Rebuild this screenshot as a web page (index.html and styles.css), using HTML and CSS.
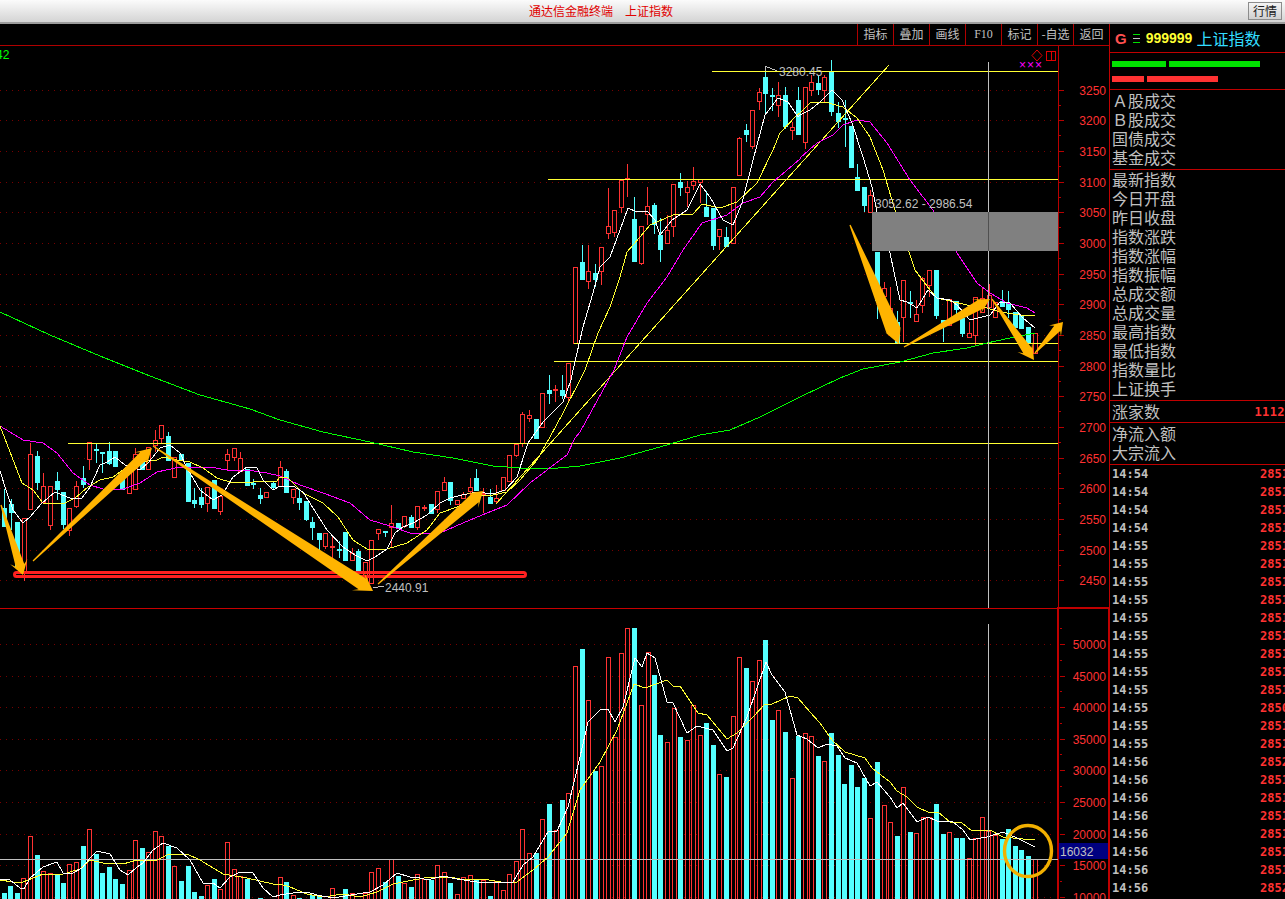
FILE: index.html
```html
<!doctype html>
<html>
<head>
<meta charset="utf-8">
<title>通达信金融终端</title>
<link rel="stylesheet" href="styles.css">
</head>
<body>
<div class="titleBar">
	<span class="titleText">通达信金融终端<span class="titleName">上证指数</span></span>
	<span class="titleBtn">行情</span>
</div>
<div class="mainRow">
	<div class="chartCol">
		<div class="toolBar">
			<span class="tool">指标</span>
			<span class="tool">叠加</span>
			<span class="tool">画线</span>
			<span class="tool toolLatin">F10</span>
			<span class="tool">标记</span>
			<span class="tool">-自选</span>
			<span class="tool">返回</span>
		</div>
		<svg id="Chart" class="chart" viewBox="0 46 1110 853" width="1110" height="853"></svg>
	</div>
	<div class="sidePanel">
		<div class="quoteHead">
			<span class="quoteG">G</span>
			<svg class="quoteIcon" width="7" height="11" viewBox="0 0 7 11">
				<path d="M0 0.5h7" stroke="#00e000"/>
				<path d="M0 4.5h7" stroke="#c0c0c0"/>
				<path d="M0 8.5h7" stroke="#00e000"/>
			</svg>
			<span class="quoteCode">999999</span>
			<span class="quoteName">上证指数</span>
		</div>
		<div class="bars">
			<div class="barRow"><i class="bar barGreen barG1"></i><i class="bar barGreen barG2"></i></div>
			<div class="barRow"><i class="bar barRed barR1"></i><i class="bar barRed barR2"></i></div>
		</div>
		<div class="group groupFirst">
			<div class="label">Ａ股成交</div>
			<div class="label">Ｂ股成交</div>
			<div class="label">国债成交</div>
			<div class="label">基金成交</div>
		</div>
		<div class="group groupIndex">
			<div class="label">最新指数</div>
			<div class="label">今日开盘</div>
			<div class="label">昨日收盘</div>
			<div class="label">指数涨跌</div>
			<div class="label">指数涨幅</div>
			<div class="label">指数振幅</div>
			<div class="label">总成交额</div>
			<div class="label">总成交量</div>
			<div class="label">最高指数</div>
			<div class="label">最低指数</div>
			<div class="label">指数量比</div>
			<div class="label">上证换手</div>
		</div>
		<div class="riseRow">
			<span class="label">涨家数</span>
			<span class="riseNum">1112</span>
		</div>
		<div class="group groupFirst">
			<div class="label">净流入额</div>
			<div class="label">大宗流入</div>
		</div>
		<div class="ticks">
			<div class="tick"><span>14:54</span><b>2851</b></div>
			<div class="tick"><span>14:54</span><b>2851</b></div>
			<div class="tick"><span>14:54</span><b>2851</b></div>
			<div class="tick"><span>14:54</span><b>2851</b></div>
			<div class="tick"><span>14:55</span><b>2851</b></div>
			<div class="tick"><span>14:55</span><b>2851</b></div>
			<div class="tick"><span>14:55</span><b>2851</b></div>
			<div class="tick"><span>14:55</span><b>2851</b></div>
			<div class="tick"><span>14:55</span><b>2851</b></div>
			<div class="tick"><span>14:55</span><b>2851</b></div>
			<div class="tick"><span>14:55</span><b>2851</b></div>
			<div class="tick"><span>14:55</span><b>2851</b></div>
			<div class="tick"><span>14:55</span><b>2851</b></div>
			<div class="tick"><span>14:55</span><b>2850</b></div>
			<div class="tick"><span>14:55</span><b>2851</b></div>
			<div class="tick"><span>14:55</span><b>2851</b></div>
			<div class="tick"><span>14:56</span><b>2852</b></div>
			<div class="tick"><span>14:56</span><b>2851</b></div>
			<div class="tick"><span>14:56</span><b>2851</b></div>
			<div class="tick"><span>14:56</span><b>2851</b></div>
			<div class="tick"><span>14:56</span><b>2851</b></div>
			<div class="tick"><span>14:56</span><b>2851</b></div>
			<div class="tick"><span>14:56</span><b>2851</b></div>
			<div class="tick"><span>14:56</span><b>2852</b></div>
		</div>
	</div>
</div>
<script src="chart.js"></script>
</body>
</html>
```

FILE: styles.css
```css
html, body {
	margin: 0;
	height: 899px;
	overflow: hidden;
	background-color: black;
}
body {
	font-family: "Noto Sans CJK SC", "Liberation Sans", sans-serif;
	color: #c0c0c0;
}
.titleBar {
	display: flex;
	align-items: center;
	height: 24px;
	box-sizing: border-box;
	border-bottom: 2px solid #9c9c9c;
	background: linear-gradient(#fbfbfb, #d4d4d4);
}
.titleText {
	margin-left: 529px;
	font-size: 12px;
	line-height: 22px;
	color: #e00000;
}
.titleName {
	margin-left: 12px;
}
.titleBtn {
	margin-left: auto;
	margin-right: 3px;
	width: 32px;
	height: 16px;
	border: 1px solid #8c8c8c;
	background: linear-gradient(#f4f4f4, #cfcfcf);
	color: #202020;
	font-size: 12px;
	line-height: 16px;
	text-align: center;
}
.mainRow {
	display: flex;
}
.chartCol {
	width: 1109px;
	flex: none;
	overflow: hidden;
}
.toolBar {
	display: flex;
	justify-content: flex-end;
	height: 22px;
	box-sizing: border-box;
	border-bottom: 1px solid #b00000;
}
.tool {
	width: 36px;
	box-sizing: border-box;
	border-left: 1px solid #b00000;
	font-size: 12px;
	line-height: 20px;
	text-align: center;
	white-space: nowrap;
}
.toolLatin {
	font-family: "Liberation Serif", serif;
	font-size: 12px;
}
.chart {
	display: block;
	font-family: "Liberation Sans", sans-serif;
	font-size: 12px;
}
.sidePanel {
	flex: 1;
	border-left: 1px solid #c00000;
	height: 875px;
	overflow: hidden;
	font-size: 16px;
}
.quoteHead {
	display: flex;
	align-items: center;
	height: 28px;
	padding-left: 5px;
	border-bottom: 1px solid #c00000;
}
.quoteG {
	font-family: "Liberation Sans", sans-serif;
	font-weight: bold;
	font-size: 15px;
	color: #ff5050;
}
.quoteIcon {
	margin: 2px 0 0 6px;
}
.quoteCode {
	margin-left: 6px;
	font-family: "Liberation Sans", sans-serif;
	font-weight: bold;
	font-size: 14px;
	color: #ffff33;
}
.quoteName {
	margin-left: 4px;
	color: #33ddff;
}
.bars {
	height: 37px;
	box-sizing: border-box;
	padding: 8px 0 0 2px;
	border-bottom: 1px solid #c00000;
}
.barRow {
	display: flex;
	gap: 3px;
	margin-bottom: 9px;
}
.bar {
	height: 6px;
}
.barGreen {
	background: #00e400;
}
.barRed {
	background: #ff3232;
}
.barG1 {
	width: 54px;
}
.barG2 {
	width: 91px;
}
.barR1 {
	width: 32px;
}
.barR2 {
	width: 71px;
}
.group {
	padding-left: 2px;
	border-bottom: 1px solid #c00000;
}
.groupFirst {
	padding-top: 1px;
	padding-bottom: 2px;
}
.groupIndex {
	padding-bottom: 2px;
}
.label {
	height: 19px;
	line-height: 19px;
	white-space: nowrap;
}
.riseRow {
	display: flex;
	justify-content: space-between;
	align-items: center;
	height: 21px;
	padding-left: 2px;
	border-bottom: 1px solid #c00000;
}
.riseNum {
	font-family: "DejaVu Sans Mono", monospace;
	font-weight: bold;
	font-size: 12px;
	letter-spacing: 0.4px;
	color: #ff3232;
}
.ticks {
	font-family: "DejaVu Sans Mono", monospace;
	font-size: 12px;
	font-weight: bold;
}
.tick {
	display: grid;
	grid-template-columns: 148px auto;
	height: 18px;
	line-height: 18px;
	padding-left: 2px;
	white-space: nowrap;
}
.tick b {
	color: #ff3232;
}
```

FILE: chart.js
```js
var NS = 'http://www.w3.org/2000/svg';
var Chart = document.getElementById('Chart');

var RED = '#ff3232';
var CYAN = '#54ffff';
var YELLOW = '#ffff33';
var AXIS = '#b80000';
var GRID = '#780000';
var AMBER = '#ffb400';

function el(name, attrs, text) {
	var node = document.createElementNS(NS, name);
	for (var k in attrs) {
		node.setAttribute(k, attrs[k]);
	}
	if (text !== undefined) {
		node.textContent = text;
	}
	Chart.appendChild(node);
	return node;
}

function hline(y, x1, x2, color, dash) {
	var attrs = {x1: x1, x2: x2, y1: y + 0.5, y2: y + 0.5, stroke: color, 'shape-rendering': 'crispEdges'};
	if (dash) {
		attrs['stroke-dasharray'] = dash;
	}
	el('line', attrs);
}

function vline(x, y1, y2, color, width) {
	el('line', {x1: x + 0.5, x2: x + 0.5, y1: y1, y2: y2, stroke: color, 'stroke-width': width || 1, 'shape-rendering': 'crispEdges'});
}

// data below was traced off crops at 3x, so every group carries the crop origin
function trace(x0, y0, pts) {
	var out = [];
	for (var i = 0; i < pts.length; i += 2) {
		out.push(Math.round(x0 + pts[i] / 3) + ',' + Math.round(y0 + pts[i + 1] / 3));
	}
	return out;
}

function curve(color, groups) {
	var pts = [];
	for (var i = 0; i < groups.length; i++) {
		pts = pts.concat(trace(groups[i][0], groups[i][1], groups[i][2]));
	}
	el('polyline', {points: pts.join(' '), fill: 'none', stroke: color, 'shape-rendering': 'crispEdges'});
}

function candle(x0, y0, row) {
	var x = Math.round(x0 + row[0] / 3);
	var color = row[1] ? RED : CYAN;
	var top = Math.round(y0 + row[2] / 3);
	var bot = Math.round(y0 + row[3] / 3);
	if (bot <= top) {
		bot = top + 1;
	}
	var hi = row[4] === undefined ? top : Math.round(y0 + row[4] / 3);
	var lo = row[5] === undefined ? bot : Math.round(y0 + row[5] / 3);
	vline(x, hi, top, color);
	vline(x, bot, lo, color);
	if (row[1]) {
		el('rect', {x: x - 1.5, y: top + 0.5, width: 4, height: bot - top, fill: 'black', stroke: color, 'shape-rendering': 'crispEdges'});
	}
	else {
		el('rect', {x: x - 2, y: top, width: 5, height: bot - top + 1, fill: color, 'shape-rendering': 'crispEdges'});
	}
}

function volBar(x0, y0, row) {
	var x = Math.round(x0 + row[0] / 3);
	var top = Math.round(y0 + row[2] / 3);
	if (row[1]) {
		el('rect', {x: x - 1.5, y: top + 0.5, width: 4, height: 910 - top, fill: 'black', stroke: RED, 'shape-rendering': 'crispEdges'});
	}
	else {
		el('rect', {x: x - 2, y: top, width: 5, height: 910 - top, fill: CYAN, 'shape-rendering': 'crispEdges'});
	}
}

function arrow(x1, y1, x2, y2, neck, head, len) {
	var l = Math.sqrt((x2 - x1) * (x2 - x1) + (y2 - y1) * (y2 - y1));
	var ux = (x2 - x1) / l;
	var uy = (y2 - y1) / l;
	function at(along, side) {
		return (x1 + ux * along - uy * side).toFixed(1) + ',' + (y1 + uy * along + ux * side).toFixed(1);
	}
	el('polygon', {fill: AMBER, points: [
		at(0, 0.6), at(l - len * 0.72, neck / 2), at(l - len, head / 2), at(l, 0),
		at(l - len, -head / 2), at(l - len * 0.72, -neck / 2), at(0, -0.6)
	].join(' ')});
}

// price grid and axis
var i, y;
for (i = 0; i <= 16; i++) {
	y = Math.floor(90.2 + i * 30.66);
	hline(y, 0, 1056, GRID, '1 5');
	hline(y, 1059, 1064, AXIS);
	if (i < 16) {
		hline(Math.round(y + 15.3), 1059, 1061, AXIS);
	}
	el('text', {x: 1106, y: y + 5, fill: RED, 'text-anchor': 'end'}, 3250 - i * 50);
}
vline(1058, 46, 608, AXIS);

// volume grid and axis
for (i = 0; i <= 8; i++) {
	y = Math.floor(644.4 + i * 31.6);
	hline(y, 0, 1056, GRID, '1 5');
	hline(y, 1060, 1065, AXIS);
	hline(Math.round(y - 15.8), 1060, 1062, AXIS);
	el('text', {x: 1106, y: y + 5, fill: RED, 'text-anchor': 'end'}, 50000 - i * 5000);
}
el('rect', {x: 1058, y: 608, width: 51, height: 300, fill: 'none', stroke: '#c00000', 'stroke-width': 2, 'shape-rendering': 'crispEdges'});
hline(608, 0, 1058, '#c80000');

// candles: x, red?, body top, body bottom, high, low
var candles = [
	[0, 410, [
		[13,0,295,348,237,350],[32,0,282,305,268,360],[52,0,337,470],[71,1,325,490,325,513],
		[91,1,133,298,100],[112,0,138,215,123,240],[130,1,229,275,190],[151,1,228,344,228,360],
		[170,0,213,237,186,270],[190,0,245,342,245,358],[208,1,295,360,295,378],[229,1,229,288,212,295],
		[250,0,204,222,167,235],[268,1,95,146,95,180],[289,0,117,118,100,160],[307,0,125,127,125,190],
		[328,0,123,160,97,165],[346,0,123,168],[367,0,190,238],[388,1,165,248],
		[406,1,133,236,115],[427,0,155,178],[445,1,110,176],[465,1,91,106,60,125],
		[484,1,46,85,46,100],[505,0,78,150,66],[523,1,140,200],[544,0,131,150],
		[565,0,158,273],[583,0,270,278,235,293],[604,0,262,282,235,295],[622,1,232,280,232,305],
		[643,0,210,293],[660,1,257,302,257,314],[682,1,133,149,118,180],[703,1,115,140,115,152],
		[721,1,145,183,125],[742,0,178,225],[760,0,218,220,208,237],[781,0,255,263,235,282],
		[799,1,247,260],[820,0,220,231,214,240]
	]],
	[280, 380, [
		[0,1,262,318,243],[19,0,273,335,268],[40,1,327,350,327,372],[58,0,354,365,330,390],
		[79,0,363,417,363,423],[97,0,426,441,410,480],[118,0,460,478,460,510],[136,1,459,497,459,508],
		[157,1,498,502,470,575],[178,0,508,510,483,535],[196,0,456,540],[217,1,520,540,503],
		[235,0,514,575,508],[256,1,545,600],[274,1,481,610],[295,1,448,458,448,480],
		[316,0,453,456,453,470],[334,1,428,440,375,505],[355,0,430,445],[373,1,408,437,408,445],
		[394,0,411,440,405,445],[412,1,379,440,379,450],[433,1,380,383,375,392],[454,0,372,400],
		[472,1,334,387,334,400],[493,1,307,330,292],[511,0,306,360,306,375],[532,1,360,372],
		[550,1,342,354,335],[571,1,322,332,295,355],[589,0,294,330,268],[610,1,338,340,325,398],
		[631,0,350,368,328],[649,1,355,362,315,372],[670,1,292,330],[688,1,226,302],
		[709,1,193,226,193,232],[727,1,103,190,95,200],[748,1,106,113,90,125],[769,0,116,175],
		[787,1,40,142],[808,0,30,38,-15,72],[826,1,27,29,15,65],[847,0,30,45,-15,58],[865,1,-50,50,-50,70]
	]],
	[540, 60, [
		[106,1,622,848],[127,0,606,658,555],[145,1,634,662,555,687],[166,0,640,656,612,680],
		[184,1,562,633,562,675],[205,1,499,520,385,537],[223,1,451,515,451,530],[244,1,361,440,361,458],
		[262,1,355,357,312,410],[283,0,477,603,411],[304,1,499,608,499,615],[322,1,439,462,381,495],
		[343,0,435,492,430,522],[361,0,526,566,475,605],[382,1,510,548,465],[400,1,373,499,373,530],
		[421,0,366,380,340,408],[442,1,382,395,362,440],[460,1,364,376,320,390],[481,1,358,366,358,430],
		[499,0,441,468,393,470],[520,0,445,555,445,570],[538,1,508,527,508,570],[559,0,531,558,500,560],
		[580,1,382,548],[598,1,235,344,230],[619,0,210,221,192,246],[637,1,151,257,151,268],
		[658,1,97,122,85,150],[676,0,51,98,25,160],[697,0,105,107,85,153],[715,1,106,136,67,170],
		[736,0,105,197,82,207],[757,1,202,211,185,240],[775,0,120,221,82],[796,1,82,247,82,267],
		[814,1,67,89,45,107],[835,0,69,87,45,105],[853,1,52,89,45,130],[874,0,34,152,0,168],[895,0,159,182,125,205]
	]],
	[800, 60, [
		[134,0,175,177,120,260],[154,0,197,320],[172,0,351,390,313],[193,0,381,435,381,455],
		[211,1,406,455,390],[232,0,575,720,575,778],[253,1,685,707,667,745],[271,1,745,790,682,800],
		[292,0,785,845,752],[310,1,661,772,661,845],[331,0,725,727,693,775],[349,1,763,784,720],
		[367,1,655,735,652,760],[388,1,631,674,631,712],[409,0,629,765,629,778],[430,0,780,785,780,845],
		[448,1,718,795],[469,0,723,748,723,775],[487,0,775,820,775,830],[508,1,820,830,785],
		[526,1,710,825,710,855],[547,1,715,755,685],[568,1,705,740,672],[586,1,725,770],
		[607,0,723,738,690],[625,0,728,748,692,775],[646,0,755,800],[664,0,765,805],
		[685,0,800,850],[706,1,820,880]
	]]
];
for (i = 0; i < candles.length; i++) {
	for (var j = 0; j < candles[i][2].length; j++) {
		candle(candles[i][0], candles[i][1], candles[i][2][j]);
	}
}

// volume: x, red?, top
var vols = [
	[0, 780, [
		[13,0,340],[31,0,318],[52,0,340],[70,1,295],[91,1,169],[112,0,226],[130,1,274],[151,1,280],
		[170,0,286],[190,0,309],[208,1,253],[229,1,247],[250,0,198],[268,1,148],[289,0,222],[307,0,279],
		[328,0,261],[346,0,297],[367,0,312],[388,1,271],[406,1,181],[427,0,204],[445,1,217],[465,1,154],
		[484,1,169],[505,0,198],[523,1,259],[544,0,303],[565,0,258],[583,0,336],[604,0,348],[622,1,316],
		[643,0,297],[660,1,328],[682,1,187],[703,1,268],[721,1,289],[742,0,297],[781,0,354]
	]],
	[280, 780, [
		[0,1,292],[19,0,306],[40,1,346],[58,0,354],[97,0,346],[118,0,348],[157,1,325],[196,0,327],
		[217,1,340],[256,1,340],[274,1,277],[295,1,265],[316,0,306],[334,1,238],[355,0,288],[373,1,310],
		[394,0,321],[412,1,283],[433,1,298],[454,0,301],[472,1,256],[493,1,277],[511,0,309],[532,1,343],
		[550,1,292],[571,1,286],[589,0,300],[610,1,301],[631,0,348],[649,1,304]
	]],
	[500, 620, [
		[10,1,810],[28,1,763],[48,1,724],[67,1,628],[88,1,700],[108,0,699],[127,1,598],[148,0,552],
		[167,1,631],[187,0,540],[205,1,520],[226,1,139],[247,0,87],[265,1,241],[286,0,453],[304,1,439],
		[325,1,112],[345,1,350],[364,1,100],[382,1,25],[403,0,24],[424,1,256],[443,1,97],[463,0,165],
		[481,0,345],[502,1,367],[521,1,265],[541,0,351],[562,1,361],[580,1,256],[601,1,346],[619,0,309],
		[640,0,375],[658,1,463],[679,0,471],[700,1,289],[718,1,112],[739,0,144],[757,1,184],[778,1,121],
		[796,0,60],[817,0,300],[835,1,271],[856,0,336]
	]],
	[790, 620, [
		[7,1,475],[25,0,348],[46,1,340],[64,1,349],[85,0,408],[103,1,424],[124,0,339],[145,0,405],
		[163,0,492],[184,0,435],[202,0,501],[223,0,474],[241,1,595],[262,0,426],[283,1,556],[301,1,607],
		[322,0,648],[340,1,502],[361,0,636],[379,1,640],[400,1,592],[418,1,592],[439,0,552],[460,0,642],
		[478,1,637],[499,0,654],[517,0,654],[538,1,714],[556,1,655],[577,1,592],[595,1,634],[616,1,646],
		[637,0,657],[655,0,627],[676,0,678],[694,0,690],[715,0,708],[736,1,718]
	]]
];
for (i = 0; i < vols.length; i++) {
	for (var v = 0; v < vols[i][2].length; v++) {
		volBar(vols[i][0], vols[i][1], vols[i][2][v]);
	}
}

// drawn levels
hline(71, 712, 1058, YELLOW);
hline(179, 548, 1058, YELLOW);
hline(343, 574, 1058, YELLOW);
hline(361, 554, 1058, YELLOW);
hline(443, 68, 1058, YELLOW);
hline(859, 0, 1058, '#c0c0c0');
el('line', {x1: 496, y1: 504, x2: 889, y2: 65, stroke: YELLOW, 'shape-rendering': 'crispEdges'});

// moving averages
curve('#00ff00', [[0, 0, [
	0,936, 150,1005, 300,1068, 450,1128, 600,1185, 750,1227, 840,1260
]], [280, 380, [
	130,155, 270,185, 400,215, 520,235, 640,258, 720,265, 800,267, 900,258
]], [0, 0, [
	1860,1374, 1980,1341, 2100,1305, 2190,1290, 2280,1251, 2400,1191, 2520,1134, 2589,1107
]], [800, 60, [
	300,905, 400,880, 500,865, 560,850, 630,833, 705,820
]]]);
curve('#ff00ff', [[0, 410, [
	0,48, 30,65, 70,90, 130,100, 170,130, 220,190, 270,225, 310,237, 370,238, 420,220, 470,185, 540,170, 630,170, 680,180, 740,180, 800,190
]], [280, 380, [
	0,288, 60,315, 130,340, 210,370, 270,420, 330,438, 400,462, 480,458, 550,430, 620,400, 680,375, 750,310, 800,270, 860,225, 885,175, 900,155
]], [540, 60, [
	222,930, 260,830, 320,730, 380,650, 430,570, 485,488, 560,465, 610,430, 660,410, 700,365, 780,296
]], [800, 60, [
	0,295, 50,250, 100,225, 130,195, 170,180, 210,185, 260,250, 330,360, 400,450, 470,580, 530,670, 570,700, 620,730, 680,745, 705,758
]]]);
curve(YELLOW, [[0, 410, [
	0,48, 35,140, 65,220, 100,240, 130,278, 190,283, 225,265, 265,232, 300,210, 340,200, 380,170, 420,155, 470,150, 490,142, 530,150, 570,155, 610,175, 650,205, 700,218, 760,215, 830,213
]], [280, 380, [
	0,290, 20,292, 70,340, 130,370, 175,410, 220,480, 260,508, 320,508, 380,490, 440,450, 480,400, 530,380, 590,345, 640,345, 680,335, 720,300, 770,240, 810,170, 850,100, 900,0
]], [540, 60, [
	135,930, 175,820, 210,740, 240,650, 262,575, 300,530, 330,495, 400,465, 460,462, 485,433, 540,445, 590,425, 650,370, 700,270, 720,220, 770,165
]], [800, 60, [
	0,160, 30,130, 75,125, 130,140, 170,175, 210,230, 250,330, 290,470, 345,630, 390,690, 410,715, 500,735, 560,745, 600,755, 660,765, 705,767
]]]);
curve('#ffffff', [[0, 410, [
	0,183, 20,250, 40,300, 70,340, 90,320, 125,280, 165,245, 185,255, 210,265, 245,265, 270,230, 300,165, 320,155, 345,140, 375,165, 420,180, 445,160, 480,115, 510,105, 540,130, 560,175, 600,240, 640,270, 665,255, 700,200, 740,170, 770,175, 790,210, 820,240
]], [280, 380, [
	0,318, 40,318, 70,335, 100,385, 140,450, 190,500, 225,525, 260,543, 285,530, 320,507, 345,460, 370,440, 400,430, 440,405, 480,370, 510,355, 545,345, 590,335, 640,342, 675,330, 710,290, 745,190, 790,125, 820,95, 850,65, 872,0
]], [540, 60, [
	100,930, 130,800, 160,700, 180,620, 210,590, 240,510, 263,445, 290,455, 320,452, 345,480, 360,525, 395,480, 440,450, 480,372, 510,410, 550,480, 580,495, 605,430, 640,300, 675,165, 715,115, 745,125, 775,170
]], [800, 60, [
	0,165, 30,150, 60,125, 95,90, 125,120, 155,190, 190,290, 215,380, 240,500, 270,580, 300,720, 320,725, 350,745, 385,690, 410,715, 450,720, 470,735, 510,780, 570,765, 600,725, 630,730, 670,775, 705,805
]]]);

// volume averages
curve(YELLOW, [[0, 780, [
	0,300, 40,307, 70,305, 130,282, 180,286, 240,268, 270,240, 310,250, 370,253, 410,240, 470,240, 500,226, 560,222, 600,240, 670,282, 740,293, 820,313
]], [280, 780, [
	0,313, 30,320, 80,342, 130,350, 190,343, 240,352, 290,335, 340,312, 400,300, 450,290, 510,290, 540,297, 610,297, 680,310
]], [500, 620, [
	50,785, 100,750, 145,710, 200,640, 240,510, 300,425, 350,330, 403,193, 435,205, 500,180, 520,197, 540,197, 595,280, 620,285, 680,358, 710,340, 760,290, 795,253, 815,253, 870,228
]], [790, 620, [
	25,233, 60,275, 90,310, 125,360, 165,395, 225,415, 245,445, 300,485, 320,513, 350,530, 380,560, 420,580, 445,575, 480,607, 515,610, 545,632, 600,630, 640,650, 700,656, 735,661
]]]);
curve('#ffffff', [[0, 780, [
	0,298, 30,300, 60,325, 72,328, 90,295, 130,260, 170,246, 190,278, 220,280, 245,265, 270,235, 290,214, 330,222, 360,270, 385,285, 410,262, 430,250, 460,210, 490,188, 530,205, 570,240, 610,310, 640,310, 660,325, 690,290, 720,275, 760,280, 790,325, 820,352
]], [280, 780, [
	0,345, 40,340, 80,335, 110,345, 160,353, 230,343, 270,335, 310,315, 350,278, 390,292, 410,290, 440,300, 490,287, 530,297, 590,305, 640,308
]], [500, 620, [
	40,785, 70,735, 100,710, 145,637, 170,632, 205,560, 240,410, 265,305, 300,270, 325,268, 345,305, 370,260, 405,113, 425,142, 440,100, 465,115, 500,245, 520,250, 560,340, 590,317, 640,330, 680,393, 700,385, 740,290, 798,125, 815,165, 855,215
]], [790, 620, [
	22,345, 50,358, 85,385, 110,372, 140,377, 165,415, 200,430, 240,497, 262,487, 300,530, 322,565, 340,548, 380,606, 415,592, 440,604, 490,606, 520,630, 540,660, 590,652, 640,635, 680,655, 735,682
]]]);

// range box
el('rect', {x: 872, y: 212, width: 186, height: 39, fill: '#808080', 'shape-rendering': 'crispEdges'});
el('text', {x: 875, y: 208, fill: '#c0c0c0'}, '3052.62 - 2986.54');

// crosshair
vline(988, 62, 212, '#c0c0c0');
vline(988, 212, 251, '#505050');
vline(988, 251, 608, '#c0c0c0');
vline(988, 624, 899, '#c0c0c0');

// high and low marks
el('path', {d: 'M765 71V66L777 71', fill: 'none', stroke: '#c0c0c0', 'shape-rendering': 'crispEdges'});
el('text', {x: 779, y: 76, fill: '#c0c0c0'}, '3280.45');
el('path', {d: 'M373 588L384 586', fill: 'none', stroke: '#c0c0c0', 'shape-rendering': 'crispEdges'});
el('text', {x: 385, y: 592, fill: '#c0c0c0'}, '2440.91');

// top right markers
el('path', {d: 'M1037 50L1042 55.5L1037 61L1032 55.5Z', fill: 'none', stroke: '#e00000'});
el('rect', {x: 1046.5, y: 51.5, width: 9, height: 9, fill: 'none', stroke: '#e00000', 'shape-rendering': 'crispEdges'});
vline(1051, 51, 61, '#e00000');
el('text', {x: 1019, y: 69, fill: '#ff00ff', 'letter-spacing': '1px'}, '×××');
el('text', {x: -4, y: 59, fill: '#00ff00'}, '42');

// current volume tag
el('rect', {x: 1059, y: 843, width: 49, height: 16, fill: '#000080', 'shape-rendering': 'crispEdges'});
el('text', {x: 1060, y: 856, fill: '#c0c0c0'}, '16032');

// hand drawn support bar, arrows and circle
el('rect', {x: 14.5, y: 572.5, width: 511, height: 4, rx: 2, fill: 'none', stroke: '#ff2020', 'stroke-width': 3});
arrow(1, 505, 23, 575, 9, 18, 14);
arrow(33, 561, 152, 448, 10, 18, 16);
arrow(153, 446, 373, 591, 13, 22, 18);
arrow(378, 584, 483, 491, 11, 19, 15);
arrow(850, 225, 899, 344, 15, 21, 20);
arrow(904, 347, 990, 299, 10, 17, 16);
arrow(992, 299, 1034, 360, 10, 18, 16);
arrow(1035, 353, 1063, 322, 8, 16, 12);
el('ellipse', {cx: 1028, cy: 851, rx: 23.5, ry: 25.5, fill: 'none', stroke: '#f2b000', 'stroke-width': 3.4});
```
